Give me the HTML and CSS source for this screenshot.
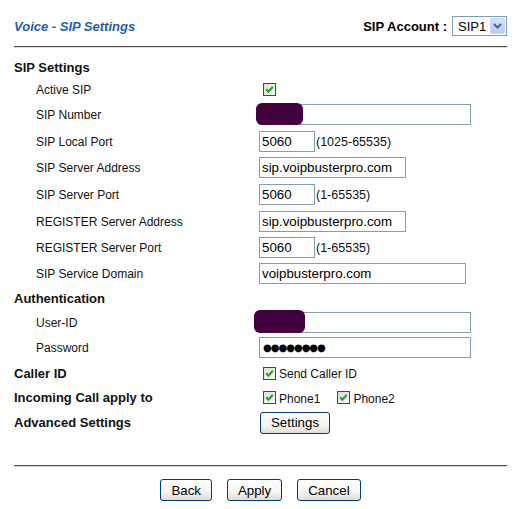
FILE: index.html
```html
<!DOCTYPE html>
<html>
<head>
<meta charset="utf-8">
<link rel="stylesheet" href="styles.css">
</head>
<body>
<div class="page">
  <div class="header">
    <div class="title">Voice - SIP Settings</div>
    <div class="account">
      <span class="account-label">SIP Account :</span>
      <div class="select"><span class="select-text">SIP1</span><span class="select-btn"><svg width="9" height="6" viewBox="0 0 9 6"><path d="M1 1 L4.5 4.5 L8 1" fill="none" stroke="#4d6185" stroke-width="2"/></svg></span></div>
    </div>
  </div>
  <div class="divider"></div>

  <div class="form">
    <div class="section full">SIP Settings</div>

    <div class="label">Active SIP</div>
    <div class="value"><span class="cb"><svg width="11" height="11" viewBox="0 0 11 11"><path d="M2.2 5.2 L4.5 7.6 L8.8 2.8" fill="none" stroke="#22a52a" stroke-width="2.1"/></svg></span></div>

    <div class="label">SIP Number</div>
    <div class="value"><span class="field"><input class="in w-long" type="text" value=""><span class="blob blob-num"></span></span></div>

    <div class="label">SIP Local Port</div>
    <div class="value"><input class="in w-port" type="text" value="5060"><span class="range">(1025-65535)</span></div>

    <div class="label">SIP Server Address</div>
    <div class="value"><input class="in w-addr" type="text" value="sip.voipbusterpro.com"></div>

    <div class="label">SIP Server Port</div>
    <div class="value"><input class="in w-port" type="text" value="5060"><span class="range">(1-65535)</span></div>

    <div class="label">REGISTER Server Address</div>
    <div class="value"><input class="in w-addr" type="text" value="sip.voipbusterpro.com"></div>

    <div class="label">REGISTER Server Port</div>
    <div class="value"><input class="in w-port" type="text" value="5060"><span class="range">(1-65535)</span></div>

    <div class="label">SIP Service Domain</div>
    <div class="value"><input class="in w-domain" type="text" value="voipbusterpro.com"></div>

    <div class="section full">Authentication</div>

    <div class="label">User-ID</div>
    <div class="value"><span class="field"><input class="in w-long" type="text" value=""><span class="blob blob-user"></span></span></div>

    <div class="label">Password</div>
    <div class="value"><input class="in w-long pw" type="text" value="●●●●●●●●"></div>

    <div class="section">Caller ID</div>
    <div class="value"><span class="cb"><svg width="11" height="11" viewBox="0 0 11 11"><path d="M2.2 5.2 L4.5 7.6 L8.8 2.8" fill="none" stroke="#22a52a" stroke-width="2.1"/></svg></span><span class="cb-text">Send Caller ID</span></div>

    <div class="section">Incoming Call apply to</div>
    <div class="value"><span class="cb"><svg width="11" height="11" viewBox="0 0 11 11"><path d="M2.2 5.2 L4.5 7.6 L8.8 2.8" fill="none" stroke="#22a52a" stroke-width="2.1"/></svg></span><span class="cb-text gap">Phone1</span><span class="cb"><svg width="11" height="11" viewBox="0 0 11 11"><path d="M2.2 5.2 L4.5 7.6 L8.8 2.8" fill="none" stroke="#22a52a" stroke-width="2.1"/></svg></span><span class="cb-text">Phone2</span></div>

    <div class="section">Advanced Settings</div>
    <div class="value"><button class="btn">Settings</button></div>
  </div>

  <div class="divider bottom"></div>
  <div class="actions">
    <button class="btn">Back</button>
    <button class="btn">Apply</button>
    <button class="btn">Cancel</button>
  </div>
</div>
</body>
</html>
```

FILE: styles.css
```css
html, body {
  margin: 0;
  padding: 0;
  background: #ffffff;
}
body {
  font-family: "Liberation Sans", Arial, sans-serif;
  font-size: 12px;
  color: #111;
}
.page {
  width: 493px;
  padding: 16px 16px 0 14px;
}
.header {
  display: flex;
  align-items: center;
  justify-content: space-between;
  height: 20px;
}
.title {
  font-size: 13px;
  font-weight: bold;
  font-style: italic;
  color: #1f5fa5;
}
.account {
  display: flex;
  align-items: center;
  gap: 5px;
}
.account-label {
  font-size: 13px;
  font-weight: bold;
  color: #000;
}
.select {
  box-sizing: border-box;
  width: 55px;
  height: 20px;
  border: 1px solid #7f9db9;
  background: #fff;
  display: flex;
  align-items: center;
  justify-content: space-between;
  padding: 0 1px 0 5px;
}
.select-text {
  font-size: 13px;
  color: #000;
}
.select-btn {
  box-sizing: border-box;
  width: 15px;
  height: 16px;
  background: linear-gradient(#d3e0fd, #b7cbf7);
  border: 1px solid #c6d6fb;
  border-radius: 2px;
  display: flex;
  align-items: center;
  justify-content: center;
}
.divider {
  margin-top: 10px;
  height: 1px;
  background: #4d4d4d;
  border-bottom: 1px solid #dcdcdc;
}
.form {
  margin-top: 8px;
  display: grid;
  grid-template-columns: 245px 1fr;
  grid-template-rows: 22px 23px 27px 27px 26px 27px 27px 26px 25px 24px 25px 26px 24px 25px 25px;
}
.section {
  align-self: center;
  font-size: 13px;
  font-weight: bold;
  color: #111;
}
.full {
  grid-column: 1 / 3;
}
.label {
  align-self: center;
  padding-left: 22px;
  color: #111;
}
.value {
  align-self: center;
  display: flex;
  align-items: center;
}
.in {
  box-sizing: border-box;
  height: 21px;
  border: 1px solid #7f9db9;
  padding: 0 2px;
  margin: -1px 0 0 0;
  font-family: "Liberation Sans", Arial, sans-serif;
  font-size: 13.3px;
  color: #000;
  background: #fff;
  outline: none;
}
.w-long { width: 212px; }
.w-port { width: 56px; }
.w-addr { width: 147px; }
.w-domain { width: 207px; }
.range {
  margin-left: 1px;
  font-size: 12.5px;
  color: #111;
}
.pw {
  font-family: "DejaVu Sans", sans-serif;
  font-size: 10px;
  letter-spacing: -1px;
  padding-left: 3px;
}
.field {
  position: relative;
  display: inline-block;
  height: 21px;
  margin-top: -1px;
}
.field .in {
  margin: 0;
}
.blob {
  position: absolute;
  background: #42003c;
  border-radius: 6px;
}
.blob-num {
  left: -3px;
  top: -1px;
  width: 47px;
  height: 22px;
}
.blob-user {
  left: -5px;
  top: -2px;
  width: 51px;
  height: 23px;
}
.cb {
  box-sizing: border-box;
  width: 13px;
  height: 13px;
  margin-left: 4px;
  border: 1px solid #1c5180;
  background: linear-gradient(135deg, #dcdcd7, #fbfbf9);
  display: inline-flex;
  align-items: center;
  justify-content: center;
}
.cb-text {
  margin-left: 3px;
  margin-top: 2px;
  font-size: 12px;
  color: #111;
}
.cb-text.gap {
  margin-right: 13px;
}
.btn {
  box-sizing: border-box;
  height: 22px;
  padding: 0 10px;
  margin: 0 0 0 1px;
  border: 1px solid #003c74;
  border-radius: 3px;
  background: linear-gradient(#ffffff 0%, #f5f4ef 60%, #e0ddd3 100%);
  font-family: "Liberation Sans", Arial, sans-serif;
  font-size: 13.3px;
  color: #000;
}
.bottom {
  margin-top: 30px;
}
.actions {
  margin-top: 12px;
  display: flex;
  justify-content: center;
  gap: 15px;
}
.actions .btn {
  margin: 0;
}
```
